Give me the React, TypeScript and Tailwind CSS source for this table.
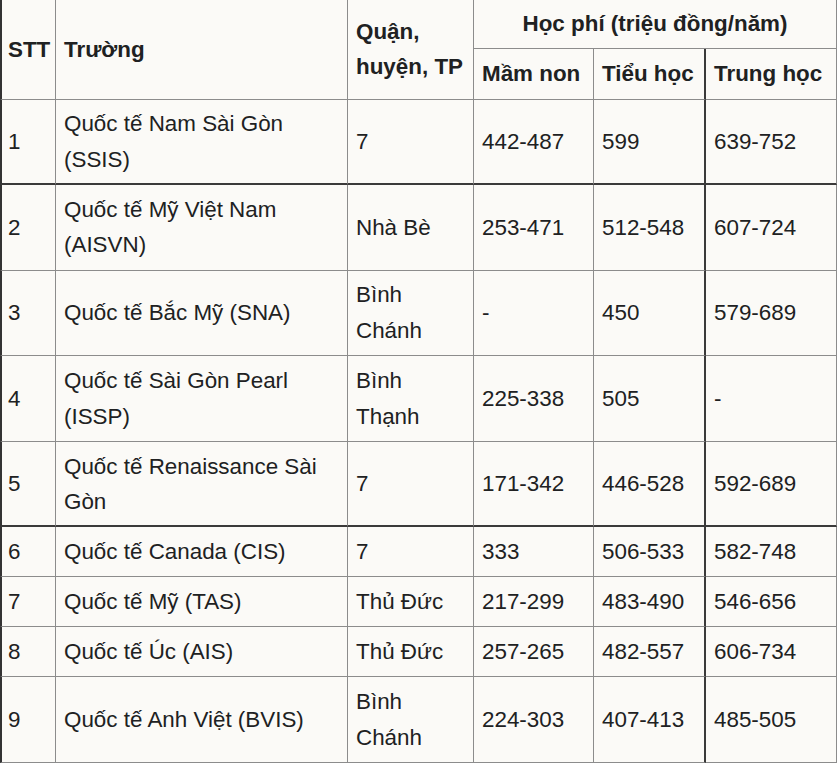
import React from "react";

type Row = {
  stt: string;
  name: string;
  district: string;
  mn: string;
  th: string;
  trh: string;
  thick?: boolean;
};

const ROWS: Row[] = [
  { stt: "1", name: "Quốc tế Nam Sài Gòn (SSIS)", district: "7", mn: "442-487", th: "599", trh: "639-752", thick: true },
  { stt: "2", name: "Quốc tế Mỹ Việt Nam (AISVN)", district: "Nhà Bè", mn: "253-471", th: "512-548", trh: "607-724" },
  { stt: "3", name: "Quốc tế Bắc Mỹ (SNA)", district: "Bình Chánh", mn: "-", th: "450", trh: "579-689" },
  { stt: "4", name: "Quốc tế Sài Gòn Pearl (ISSP)", district: "Bình Thạnh", mn: "225-338", th: "505", trh: "-" },
  { stt: "5", name: "Quốc tế Renaissance Sài Gòn", district: "7", mn: "171-342", th: "446-528", trh: "592-689", thick: true },
  { stt: "6", name: "Quốc tế Canada (CIS)", district: "7", mn: "333", th: "506-533", trh: "582-748" },
  { stt: "7", name: "Quốc tế Mỹ (TAS)", district: "Thủ Đức", mn: "217-299", th: "483-490", trh: "546-656" },
  { stt: "8", name: "Quốc tế Úc (AIS)", district: "Thủ Đức", mn: "257-265", th: "482-557", trh: "606-734" },
  { stt: "9", name: "Quốc tế Anh Việt (BVIS)", district: "Bình Chánh", mn: "224-303", th: "407-413", trh: "485-505" },
];

const head = "px-2 py-[7px] align-middle text-left border-r border-b border-[#8c8c8c] font-bold";
const cell = "px-2 pt-[6.7px] align-middle text-left border-r border-b border-[#8c8c8c]";
const first = "border-l-2 border-l-[#333] pl-[6px]";
const dark = "border-r-2 border-r-[#3a3a3a]";

export default function App() {
  return (
    <div className="w-[837px] h-[763px] overflow-hidden bg-[#fbfaf7] font-['Liberation_Sans',Arial,sans-serif] text-[22.4px] leading-[35.6px] text-[#202122]">
      <table className="table-fixed w-[837px] border-separate border-spacing-0">
        <colgroup>
          <col className="w-[56px]" />
          <col className="w-[292px]" />
          <col className="w-[126px]" />
          <col className="w-[120px]" />
          <col className="w-[112px]" />
          <col className="w-[131px]" />
        </colgroup>
        <thead>
          <tr>
            <th rowSpan={2} className={`${head} ${first}`}>STT</th>
            <th rowSpan={2} className={head}>Trường</th>
            <th rowSpan={2} className={head}>Quận, huyện, TP</th>
            <th colSpan={3} className="px-2 py-[6px] h-[48px] text-center font-bold border-r border-b border-[#8c8c8c]">
              Học phí (triệu đồng/năm)
            </th>
          </tr>
          <tr>
            <th className={`${head} h-[51px]`}>Mầm non</th>
            <th className={`${head} ${dark}`}>Tiểu học</th>
            <th className={head}>Trung học</th>
          </tr>
        </thead>
        <tbody>
          {ROWS.map((r) => {
            const b = r.thick ? "border-b-2 border-b-[#3a3a3a] pb-[5.7px]" : "pb-[6.7px]";
            return (
              <tr key={r.stt}>
                <td className={`${cell} ${b} ${first}`}>{r.stt}</td>
                <td className={`${cell} ${b}`}>{r.name}</td>
                <td className={`${cell} ${b}`}>{r.district}</td>
                <td className={`${cell} ${b}`}>{r.mn}</td>
                <td className={`${cell} ${b} ${dark}`}>{r.th}</td>
                <td className={`${cell} ${b}`}>{r.trh}</td>
              </tr>
            );
          })}
        </tbody>
      </table>
    </div>
  );
}
